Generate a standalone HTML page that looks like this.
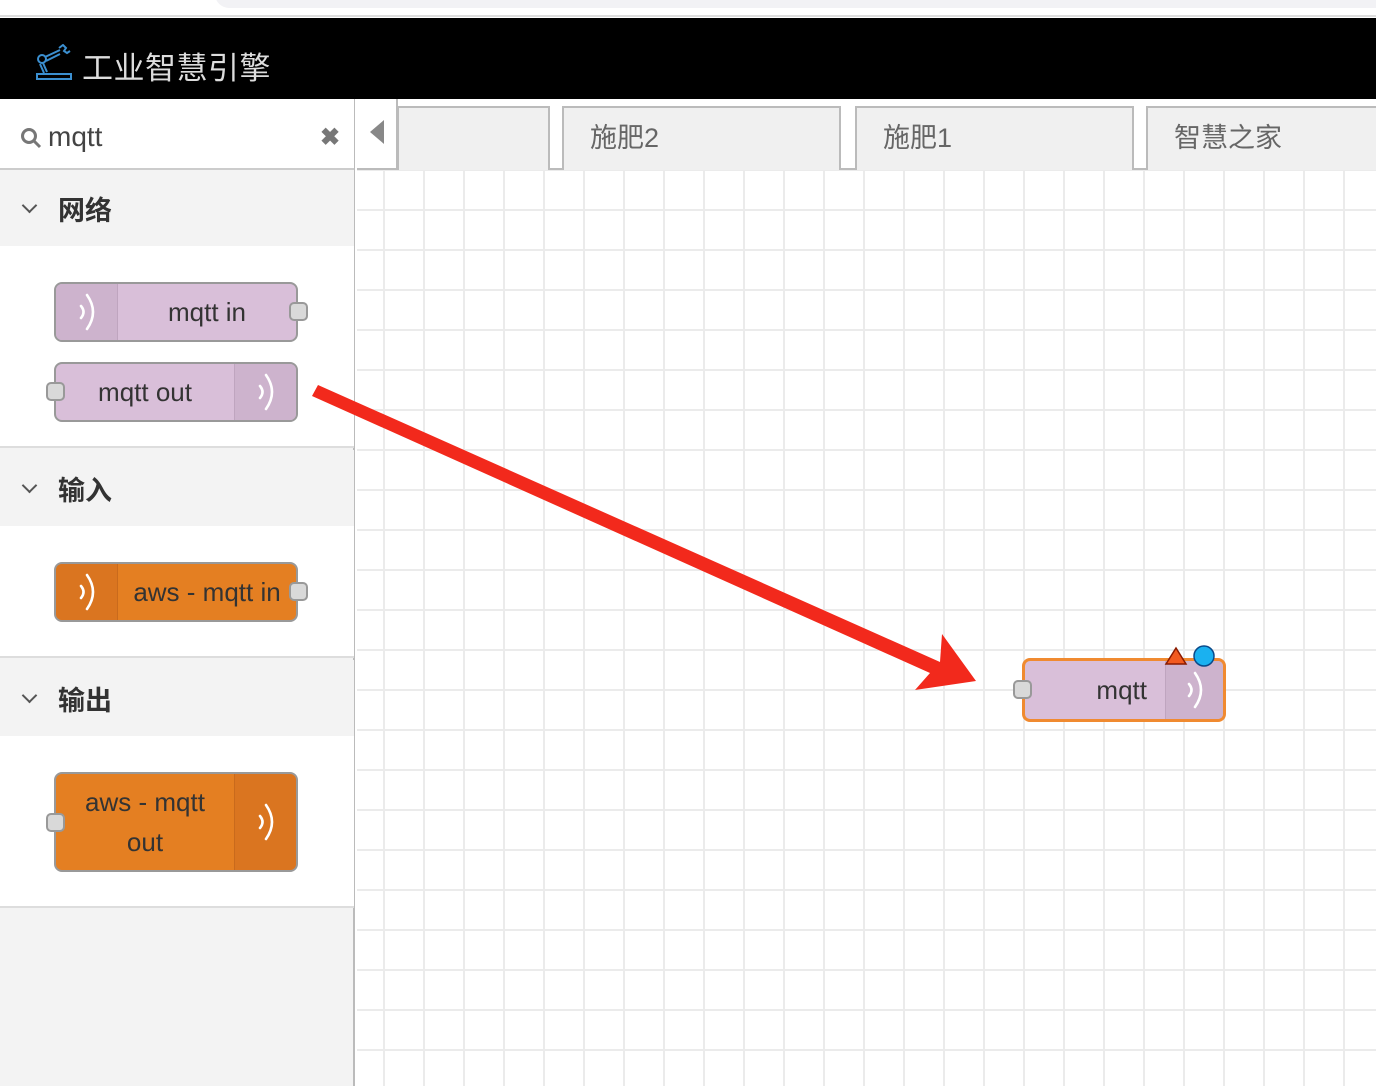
<!DOCTYPE html>
<html><head><meta charset="utf-8"><style>
*{box-sizing:border-box;margin:0;padding:0}
body{width:1376px;height:1086px;overflow:hidden;background:#fff;font-family:"Liberation Sans","Noto Sans CJK SC",sans-serif;position:relative}
.abs{position:absolute}
.node{position:absolute;border:2px solid #999;border-radius:8px;color:#333;font-size:26px;display:flex;align-items:center;justify-content:center;text-align:center;line-height:40px}
.ic{position:absolute;top:0;bottom:0;width:62px;display:flex;align-items:center;justify-content:center}
.port{position:absolute;width:19px;height:19px;background:#d9d9d9;border:2px solid #999;border-radius:5px}
.cat{position:absolute;left:0;width:354px;height:76px;background:#f3f3f3;font-size:27px;font-weight:bold;color:#333;display:flex;align-items:center;padding-left:58px}
.cat:before{content:"";position:absolute;left:24px;top:30px;width:9px;height:9px;border-right:2px solid #555;border-bottom:2px solid #555;transform:rotate(45deg)}
.tab{position:absolute;top:106px;height:64px;background:#f0f0f0;border:2px solid #bbb;border-bottom:none;font-size:27px;color:#666;padding-left:26px;line-height:60px}
</style></head><body>
<div class="abs" style="left:0;top:0;width:1376px;height:17px;background:#fff;border-bottom:2px solid #ddd"></div>
<div class="abs" style="left:215px;top:-20px;width:1200px;height:28px;background:#f2f2f5;border-radius:14px"></div>
<div class="abs" style="left:0;top:18px;width:1376px;height:81px;background:#000"></div>
<svg class="abs" style="left:34px;top:44px" width="40" height="38" viewBox="0 0 40 38" fill="none" stroke="#3b8fd0" stroke-width="2"><rect x="3" y="30" width="34" height="5"/><circle cx="8" cy="15" r="4"/><path d="M10 29 L6 20 M13 28 L9 19 M11 13 L26 6 M12 17 L26 10 M25 4 l4-3 3 3-2 3 3 2 3-2" /></svg>
<div class="abs" style="left:82px;top:43px;font-size:31px;color:#ddd;letter-spacing:0.5px">工业智慧引擎</div>

<div class="abs" style="left:0;top:99px;width:355px;height:987px;background:#f3f3f3;border-right:2px solid #bbb"></div>
<div class="abs" style="left:0;top:99px;width:354px;height:71px;background:#fff;border-bottom:2px solid #ccc"></div>
<svg class="abs" style="left:20px;top:127px" width="22" height="22" viewBox="0 0 22 22" fill="none" stroke="#777" stroke-width="3"><circle cx="9" cy="9" r="6.5"/><path d="M14 14 L20 20"/></svg>
<div class="abs" style="left:48px;top:121px;font-size:28px;color:#444">mqtt</div>
<div class="abs" style="left:320px;top:123px;font-size:24px;color:#777;font-weight:bold">✖</div>

<div class="cat" style="top:170px">网络</div>
<div class="abs" style="left:0;top:246px;width:354px;height:202px;background:#fff;border-bottom:2px solid #ddd"></div>
<div class="cat" style="top:450px">输入</div>
<div class="abs" style="left:0;top:526px;width:354px;height:132px;background:#fff;border-bottom:2px solid #ddd"></div>
<div class="cat" style="top:660px">输出</div>
<div class="abs" style="left:0;top:736px;width:354px;height:172px;background:#fff;border-bottom:2px solid #ddd"></div>

<svg width="0" height="0" style="position:absolute"><defs><g id="w" fill="none" stroke="#fff" stroke-width="2.6" stroke-linecap="round"><path d="M6 16 Q11 22 6 28"/><path d="M12 5 Q24 22 12 39"/></g></defs></svg>

<div class="node" style="left:54px;top:282px;width:244px;height:60px;background:#d9bfd9;padding-left:62px"><div class="ic" style="left:0;background:#cdb3cd;border-right:1px solid #bfa5bf;border-radius:6px 0 0 6px"><svg width="24" height="44"><use href="#w"/></svg></div>mqtt in<div class="port" style="right:-12px;top:18px"></div></div>
<div class="node" style="left:54px;top:362px;width:244px;height:60px;background:#d9bfd9;padding-right:62px"><div class="ic" style="right:0;background:#cdb3cd;border-left:1px solid #bfa5bf;border-radius:0 6px 6px 0"><svg width="24" height="44"><use href="#w"/></svg></div>mqtt out<div class="port" style="left:-10px;top:18px"></div></div>
<div class="node" style="left:54px;top:562px;width:244px;height:60px;background:#e47f22;padding-left:62px"><div class="ic" style="left:0;background:#da7520;border-right:1px solid #c96a1c;border-radius:6px 0 0 6px"><svg width="24" height="44"><use href="#w"/></svg></div>aws - mqtt in<div class="port" style="right:-12px;top:18px"></div></div>
<div class="node" style="left:54px;top:772px;width:244px;height:100px;background:#e47f22;padding-right:62px"><div class="ic" style="right:0;background:#da7520;border-left:1px solid #c96a1c;border-radius:0 6px 6px 0"><svg width="24" height="44"><use href="#w"/></svg></div>aws - mqtt<br>out<div class="port" style="left:-10px;top:39px"></div></div>

<div class="abs" style="left:357px;top:170px;width:1019px;height:916px;background-color:#fff;background-image:linear-gradient(to right,#ebebeb 2px,transparent 2px),linear-gradient(to bottom,#ebebeb 2px,transparent 2px);background-size:40px 40px;background-position:26px 39px"></div>
<div class="abs" style="left:357px;top:99px;width:1019px;height:71px;background:#fff;border-bottom:2px solid #bbb"></div>
<div class="abs" style="left:396px;top:99px;width:2px;height:71px;background:#bbb"></div>
<div class="abs" style="left:370px;top:120px;width:0;height:0;border-top:12px solid transparent;border-bottom:12px solid transparent;border-right:14px solid #888"></div>
<div class="tab" style="left:397px;width:153px"></div>
<div class="tab" style="left:562px;width:279px">施肥2</div>
<div class="tab" style="left:855px;width:279px">施肥1</div>
<div class="tab" style="left:1146px;width:240px">智慧之家</div>

<div class="node" style="left:1022px;top:658px;width:204px;height:64px;background:#d9bfd9;border:3px solid #f08a30;justify-content:flex-end;padding-right:76px;color:#333"><div class="ic" style="right:0;width:58px;background:#cdb3cd;border-left:1px solid #bfa5bf;border-radius:0 5px 5px 0"><svg width="24" height="44"><use href="#w"/></svg></div>mqtt<div class="port" style="left:-12px;top:19px"></div></div>
<svg class="abs" style="left:1164px;top:644px" width="60" height="26"><polygon points="2,20 12,4 22,20" fill="#f25a1f" stroke="#8a1a00" stroke-width="1.5"/><circle cx="40" cy="12" r="10" fill="#1ab1f0" stroke="#0a4a8a" stroke-width="1.5"/></svg>

<svg class="abs" style="left:0;top:0" width="1376" height="1086"><polygon points="312,396 318,385 940,662 942,634 976,681 915,690 930,673" fill="#f2291c"/></svg>
</body></html>
